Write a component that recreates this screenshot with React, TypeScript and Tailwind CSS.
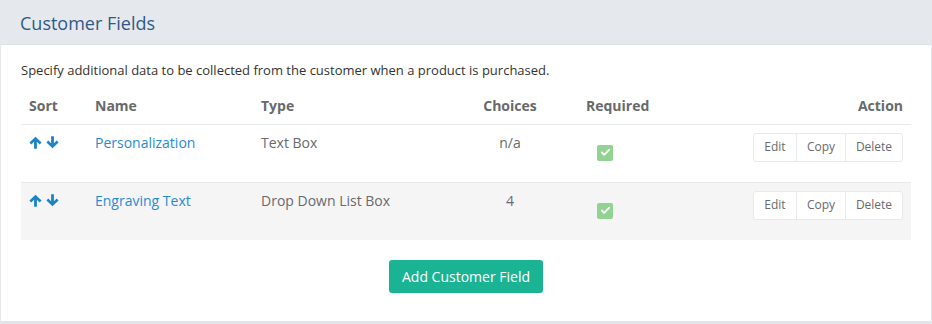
import { Check } from "lucide-react";

type Field = { name: string; type: string; choices: string; required: boolean };

const fields: Field[] = [
  { name: "Personalization", type: "Text Box", choices: "n/a", required: true },
  { name: "Engraving Text", type: "Drop Down List Box", choices: "4", required: true },
];

// solid arrow like the font icon in the reference
function SortArrow({ down }: { down?: boolean }) {
  return (
    <svg width="13" height="13" viewBox="0 0 12 12" className={down ? "rotate-180" : ""} fill="currentColor">
      <path d="M6 0.6 L11.6 6.1 L9.9 7.8 L7.3 5.3 V11.8 H4.7 V5.3 L2.1 7.8 L0.4 6.1 Z" />
    </svg>
  );
}

export default function App() {
  return (
    <div className="w-[932px] h-[324px] bg-white font-['Open_Sans',sans-serif] text-[#676a6c]">
      <div className="w-[932px] border border-[#e5e9ed] border-b-[4px] border-b-[#e2e5e8]">
        {/* Header */}
        <div className="h-[44px] bg-[#e5e9ed] flex items-center px-[19px] border-b border-[#dde2e6]">
          <h2 className="text-[18px] text-[#2e5a87] font-normal leading-none">Customer Fields</h2>
        </div>

        {/* Body */}
        <div className="px-5 pt-[15px] pb-[28px]">
          <p className="text-[13px] leading-5 text-[#333]">
            Specify additional data to be collected from the customer when a product is purchased.
          </p>

          <table className="w-full mt-[4px] border-collapse text-[14px]">
            <thead>
              <tr className="border-b border-[#e7eaec] h-[40px]">
                <th className="w-[66px] pl-2 pt-[3px] text-left font-bold">Sort</th>
                <th className="w-[166px] pl-2 pt-[3px] text-left font-bold">Name</th>
                <th className="w-[197px] pl-2 pt-[3px] text-left font-bold">Type</th>
                <th className="w-[120px] pt-[3px] text-center font-bold">Choices</th>
                <th className="w-[150px] pl-4 pt-[3px] text-left font-bold">Required</th>
                <th className="pr-2 pt-[3px] text-right font-bold">Action</th>
              </tr>
            </thead>
            <tbody>
              {fields.map((f, i) => (
                <tr
                  key={f.name}
                  className={`h-[58px] align-top border-b border-[#e7eaec] ${i === 1 ? "bg-[#f5f5f5] border-b-0" : ""}`}
                >
                  <td className="pl-2 pt-[8px]">
                    <div className="flex items-center h-5 text-[#1c84c6]">
                      <SortArrow />
                      <span className="ml-[4px] flex">
                        <SortArrow down />
                      </span>
                    </div>
                  </td>
                  <td className="pl-2 pt-[8px] leading-5 text-[#2a8bd3]">{f.name}</td>
                  <td className="pl-2 pt-[8px] leading-5">{f.type}</td>
                  <td className="pt-[8px] leading-5 text-center">{f.choices}</td>
                  <td className="pt-[20px] pl-[27px]">
                    {f.required && (
                      <div className="w-[16px] h-[16px] rounded-[2px] bg-[#92d393] flex items-center justify-center">
                        <Check size={11} strokeWidth={4} className="text-white" />
                      </div>
                    )}
                  </td>
                  <td className="pr-2 pt-[8px]">
                    <div className="flex justify-end">
                      <div className="flex h-[29px] border border-[#e7eaec] rounded-[3px] bg-white text-[12px] text-[#676a6c]">
                        <span className="w-[42px] flex items-center justify-center">Edit</span>
                        <span className="w-[49px] flex items-center justify-center border-l border-[#e7eaec]">Copy</span>
                        <span className="w-[57px] flex items-center justify-center border-l border-[#e7eaec]">Delete</span>
                      </div>
                    </div>
                  </td>
                </tr>
              ))}
            </tbody>
          </table>

          <div className="flex justify-center mt-[20px]">
            <button className="w-[154px] h-[33px] rounded-[3px] bg-[#1ab394] text-white text-[14px]">
              Add Customer Field
            </button>
          </div>
        </div>
      </div>
    </div>
  );
}
